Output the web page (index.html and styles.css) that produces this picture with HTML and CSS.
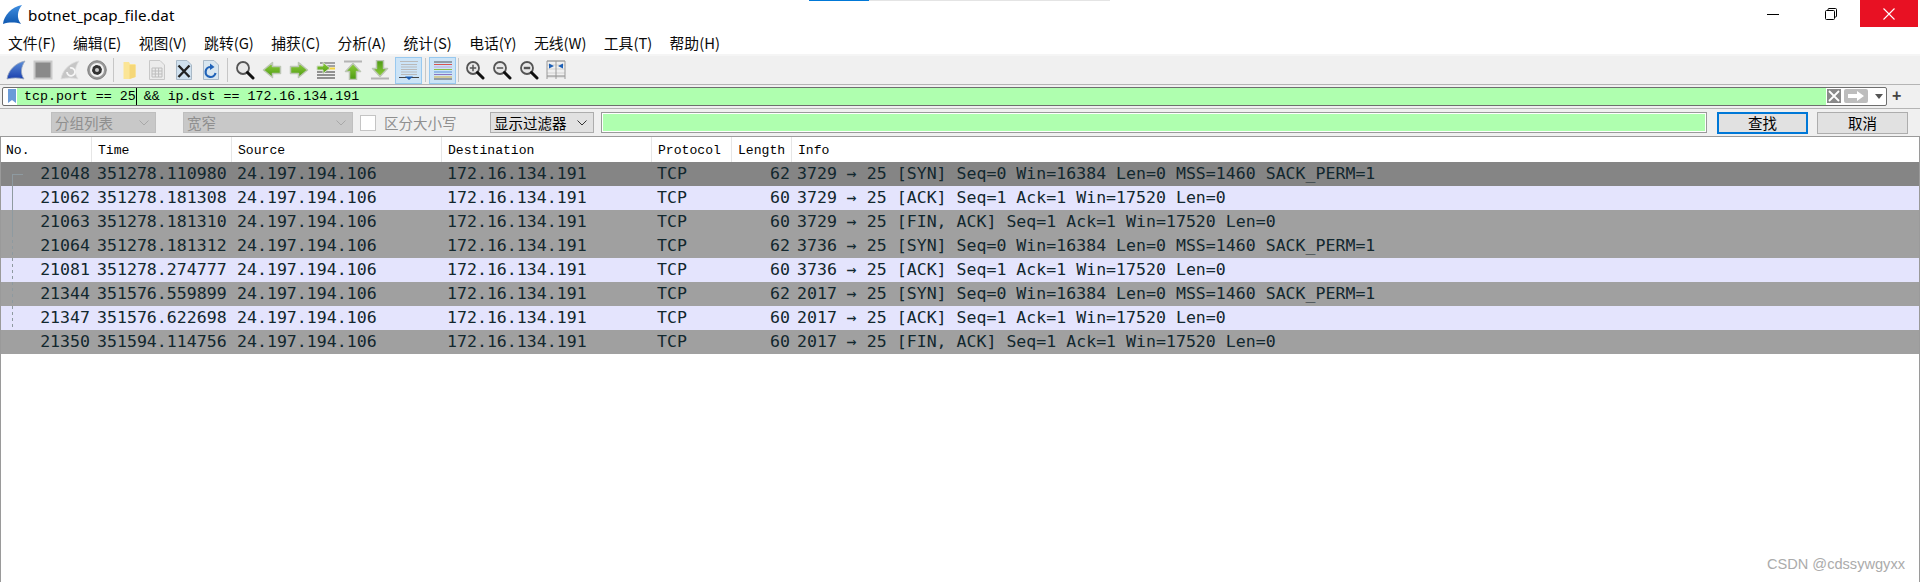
FILE: index.html
```html
<!DOCTYPE html>
<html lang="zh-CN">
<head>
<meta charset="utf-8">
<title>botnet_pcap_file.dat</title>
<link rel="stylesheet" href="styles.css">
</head>
<body>
<svg class="defs" width="0" height="0" aria-hidden="true">
  <defs>
    <linearGradient id="fin" x1="0" y1="0" x2="0" y2="1"><stop offset="0" stop-color="#5d8fd8"/><stop offset="1" stop-color="#1a3fae"/></linearGradient>
    <linearGradient id="finTitle" x1="0" y1="0" x2="0" y2="1"><stop offset="0" stop-color="#3f8ee0"/><stop offset="1" stop-color="#0f58b0"/></linearGradient>
    <linearGradient id="leaf" x1="0" y1="0" x2="0" y2="1"><stop offset="0" stop-color="#8fce3c"/><stop offset="1" stop-color="#4c9a12"/></linearGradient>
    <symbol id="lens" viewBox="0 0 20 20">
      <circle cx="8" cy="8" r="6" fill="#e8e8e8" stroke="#555" stroke-width="1.8"/>
      <path d="M12.5 12.5L18 18" stroke="#111" stroke-width="3" stroke-linecap="round"/>
    </symbol>
    <symbol id="arrowRight" viewBox="0 0 20 20">
      <path d="M1.500 6.500H9.500V2.500L18.500 10L9.500 17.500V13.500H1.500Z" fill="url(#leaf)" stroke="#bcc6b4" stroke-width="1.500" stroke-linejoin="round"/>
    </symbol>
    <symbol id="arrowUp" viewBox="0 0 20 20">
      <path d="M6.500 18.500V10.500H2.500L10 2.500L17.500 10.500H13.500V18.500Z" fill="url(#leaf)" stroke="#bcc6b4" stroke-width="1.500" stroke-linejoin="round"/>
    </symbol>
  </defs>
</svg>

<div class="progress"><span class="progress-fill"></span></div>

<header class="titlebar">
  <div class="title">
    <svg class="title-icon" viewBox="0 0 22 21"><path d="M1 20C2 11 10 2 21 0C16 6 15 14 20 20C14 18 7 18 1 20Z" fill="url(#finTitle)"/></svg>
    <span>botnet_pcap_file.dat</span>
  </div>
  <div class="winctl">
    <span class="winbtn"><svg width="12" height="12" viewBox="0 0 12 12"><path d="M0 6.500H12" stroke="#000"/></svg></span>
    <span class="winbtn"><svg width="12" height="12" viewBox="0 0 12 12" fill="none" stroke="#000"><rect x="0.500" y="2.500" width="9" height="9" rx="1"/><path d="M3 2.500V1.500a1 1 0 0 1 1-1H10.500a1 1 0 0 1 1 1V8a1 1 0 0 1-1 1H9.500"/></svg></span>
    <span class="winbtn close"><svg width="12" height="12" viewBox="0 0 12 12"><path d="M0.500 0.500L11.500 11.500M11.500 0.500L0.500 11.500" stroke="#fff" stroke-width="1.100"/></svg></span>
  </div>
</header>

<nav class="menubar">
  <span>文件(F)</span><span>编辑(E)</span><span>视图(V)</span><span>跳转(G)</span><span>捕获(C)</span><span>分析(A)</span><span>统计(S)</span><span>电话(Y)</span><span>无线(W)</span><span>工具(T)</span><span>帮助(H)</span>
</nav>

<div class="toolbar">
  <span class="tool"><svg viewBox="0 0 20 20"><path d="M1 19C2 11 9 3 19 1C15 7 14 13 18 19C12 17.500 7 17.500 1 19Z" fill="url(#fin)" stroke="#9aa7bd" stroke-width="0.800"/></svg></span>
  <span class="tool"><svg viewBox="0 0 20 20"><rect x="1.500" y="1.500" width="17" height="17" fill="#8a8a8a" stroke="#c9c9c9" stroke-width="2"/></svg></span>
  <span class="tool"><svg viewBox="0 0 20 20"><path d="M1 19C2 11 9 3 19 1C15 7 14 13 18 19C12 17.500 7 17.500 1 19Z" fill="#c6c6c6" stroke="#dedede" stroke-width="0.800"/><path d="M7 12a4 4 0 1 0 3-4" fill="none" stroke="#f6f6f6" stroke-width="1.800"/></svg></span>
  <span class="tool"><svg viewBox="0 0 20 20"><circle cx="10" cy="10" r="9.300" fill="#9a9a9a" stroke="#707070" stroke-width="0.800"/><circle cx="10" cy="10" r="7" fill="#f2f2f2"/><circle cx="10" cy="10" r="5" fill="#333"/><circle cx="10" cy="10" r="5.300" fill="none" stroke="#f2f2f2" stroke-width="1" stroke-dasharray="1.600 2.560"/><circle cx="10" cy="10" r="2" fill="#c8c8c8"/></svg></span>
  <span class="tool-sep"></span>
  <span class="tool"><svg viewBox="0 0 20 20"><path d="M3.500 2H9L10 4H15.500V17L9.500 19H3.500Z" fill="#fbe596"/><path d="M9.500 5H15.500V17L9.500 19Z" fill="#f5d778"/></svg></span>
  <span class="tool"><svg viewBox="0 0 20 20"><path d="M2.500 0.500H13L17.500 5V19.500H2.500Z" fill="#ebebeb" stroke="#c8c8c8"/><path d="M5 8H15V17H5ZM5 11H15M5 14H15M8.300 8V17M11.600 8V17" fill="none" stroke="#bdbdbd"/></svg></span>
  <span class="tool"><svg viewBox="0 0 20 20"><path d="M2.500 0.500H13L17.500 5V19.500H2.500Z" fill="#cfe0ee" stroke="#a9b9c7"/><path d="M4.500 5.500L15.500 17M15.500 5.500L4.500 17" stroke="#222" stroke-width="2.400"/></svg></span>
  <span class="tool"><svg viewBox="0 0 20 20"><path d="M2.500 0.500H13L17.500 5V19.500H2.500Z" fill="#d8e6f0" stroke="#a9b9c7"/><path d="M14.500 13A5 5 0 1 1 10 7" fill="none" stroke="#1f62b8" stroke-width="2.200"/><path d="M9 3.500L13.500 7L9 10Z" fill="#1f62b8"/></svg></span>
  <span class="tool-sep wide"></span>
  <span class="tool"><svg viewBox="0 0 20 20"><use href="#lens"/></svg></span>
  <span class="tool"><svg class="flip" viewBox="0 0 20 20"><use href="#arrowRight"/></svg></span>
  <span class="tool"><svg viewBox="0 0 20 20"><use href="#arrowRight"/></svg></span>
  <span class="tool"><svg viewBox="0 0 20 20"><path d="M4 3H19M11 6H19" stroke="#555"/><path d="M12 8.500H19" stroke="#f2d23c" stroke-width="2"/><path d="M1 12H19M1 15H19M1 18H19" stroke="#333" stroke-width="1.200"/><path d="M1 6H7V2.500L14 8L7 13.500V10H1Z" fill="url(#leaf)" stroke="#d2dbc9"/></svg></span>
  <span class="tool"><svg viewBox="0 0 20 20"><path d="M1 1.500H19" stroke="#b4b4b4" stroke-width="2"/><use href="#arrowUp" y="1"/></svg></span>
  <span class="tool"><svg class="flip-y" viewBox="0 0 20 20"><path d="M1 1.500H19" stroke="#b4b4b4" stroke-width="2"/><use href="#arrowUp" y="1"/></svg></span>
  <span class="tool toggled first-toggle"><svg viewBox="0 0 20 20"><path d="M1 1.500H19M2 4.500H18M2 7H18M2 9.500H18M2 12H18M2 14.500H18" stroke="#b9b9b9"/><path d="M0 17.500H20" stroke="#444"/><path d="M6 16.500H14L10 20Z" fill="#1c5fb6"/></svg></span>
  <span class="tool-sep wide"></span>
  <span class="tool toggled"><svg viewBox="0 0 20 20"><path d="M1 2H19" stroke="#555"/><path d="M1 4.500H19" stroke="#d9534f"/><path d="M1 7H19" stroke="#bfa4d8"/><path d="M1 9.500H19" stroke="#8fbf4a"/><path d="M1 12H19" stroke="#5b8fd8"/><path d="M1 14.500H19" stroke="#8a76c2"/><path d="M1 17H19" stroke="#d9b13c"/><path d="M1 19H19" stroke="#555"/></svg></span>
  <span class="tool-sep narrow"></span>
  <span class="tool"><svg viewBox="0 0 20 20"><use href="#lens"/><path d="M4.800 8H11.200M8 4.800V11.200" stroke="#555" stroke-width="1.500"/></svg></span>
  <span class="tool"><svg viewBox="0 0 20 20"><use href="#lens"/><path d="M4.800 8H11.200" stroke="#555" stroke-width="1.500"/></svg></span>
  <span class="tool"><svg viewBox="0 0 20 20"><use href="#lens"/><rect x="4.800" y="6.800" width="6.400" height="2.400" fill="#555"/></svg></span>
  <span class="tool"><svg viewBox="0 0 20 20"><path d="M1 1H19M1 5H19M1 9H19M1 13H19M1 17H19" stroke="#d2d2d2"/><path d="M1 1H19M1 16H19" stroke="#8a8a8a"/><path d="M1 1V19M10 1V19M19 1V19" stroke="#9a9a9a"/><path d="M3 3.500L8 6L3 8.500ZM17 3.500L12 6L17 8.500Z" fill="#1c5fb6"/></svg></span>
</div>

<div class="filterbar">
  <div class="filter">
    <span class="bookmark"><svg width="8" height="14" viewBox="0 0 8 14"><path d="M0 0H8V14L4 11L0 14Z" fill="#6a9bd8"/></svg></span>
    <div class="filter-text">tcp.port == 25<span class="caret"></span> &amp;&amp; ip.dst == 172.16.134.191</div>
    <div class="filter-actions">
      <span class="clear-btn"><svg width="12" height="12" viewBox="0 0 12 12"><path d="M1 1L11 11M11 1L1 11" stroke="#fff" stroke-width="1.800"/></svg></span>
      <span class="apply-btn"><svg width="16" height="10" viewBox="0 0 16 10"><path d="M0 3H9V0L16 5L9 10V7H0Z" fill="#fff"/></svg></span>
      <span class="drop-btn"></span>
    </div>
  </div>
  <span class="plus">+</span>
</div>

<div class="findbar">
  <span class="select disabled w-list">分组列表<svg class="chev" viewBox="0 0 10 6"><path d="M0.500 0.500L5 5L9.500 0.500" fill="none" stroke="#a8a8a8"/></svg></span>
  <span class="select disabled w-width">宽窄<svg class="chev" viewBox="0 0 10 6"><path d="M0.500 0.500L5 5L9.500 0.500" fill="none" stroke="#a8a8a8"/></svg></span>
  <span class="check"></span>
  <span class="check-label">区分大小写</span>
  <span class="select w-mode">显示过滤器<svg class="chev" viewBox="0 0 10 6"><path d="M0.500 0.500L5 5L9.500 0.500" fill="none" stroke="#333"/></svg></span>
  <span class="find-input"></span>
  <span class="btn primary">查找</span>
  <span class="btn">取消</span>
</div>

<main class="packets">
  <div class="row head">
    <span>No.</span><span>Time</span><span>Source</span><span>Destination</span><span>Protocol</span><span>Length</span><span>Info</span>
  </div>
  <div class="row dark"><span class="no"><i class="rel rel-start"></i>21048</span><span>351278.110980</span><span>24.197.194.106</span><span>172.16.134.191</span><span>TCP</span><span class="len">62</span><span>3729 → 25 [SYN] Seq=0 Win=16384 Len=0 MSS=1460 SACK_PERM=1</span></div>
  <div class="row ack"><span class="no"><i class="rel"></i>21062</span><span>351278.181308</span><span>24.197.194.106</span><span>172.16.134.191</span><span>TCP</span><span class="len">60</span><span>3729 → 25 [ACK] Seq=1 Ack=1 Win=17520 Len=0</span></div>
  <div class="row flag"><span class="no"><i class="rel"></i>21063</span><span>351278.181310</span><span>24.197.194.106</span><span>172.16.134.191</span><span>TCP</span><span class="len">60</span><span>3729 → 25 [FIN, ACK] Seq=1 Ack=1 Win=17520 Len=0</span></div>
  <div class="row flag"><span class="no"><i class="rel rel-dash"></i>21064</span><span>351278.181312</span><span>24.197.194.106</span><span>172.16.134.191</span><span>TCP</span><span class="len">62</span><span>3736 → 25 [SYN] Seq=0 Win=16384 Len=0 MSS=1460 SACK_PERM=1</span></div>
  <div class="row ack"><span class="no"><i class="rel rel-dash"></i>21081</span><span>351278.274777</span><span>24.197.194.106</span><span>172.16.134.191</span><span>TCP</span><span class="len">60</span><span>3736 → 25 [ACK] Seq=1 Ack=1 Win=17520 Len=0</span></div>
  <div class="row flag"><span class="no"><i class="rel rel-dash"></i>21344</span><span>351576.559899</span><span>24.197.194.106</span><span>172.16.134.191</span><span>TCP</span><span class="len">62</span><span>2017 → 25 [SYN] Seq=0 Win=16384 Len=0 MSS=1460 SACK_PERM=1</span></div>
  <div class="row ack"><span class="no"><i class="rel rel-dash rel-end"></i>21347</span><span>351576.622698</span><span>24.197.194.106</span><span>172.16.134.191</span><span>TCP</span><span class="len">60</span><span>2017 → 25 [ACK] Seq=1 Ack=1 Win=17520 Len=0</span></div>
  <div class="row flag"><span class="no">21350</span><span>351594.114756</span><span>24.197.194.106</span><span>172.16.134.191</span><span>TCP</span><span class="len">60</span><span>2017 → 25 [FIN, ACK] Seq=1 Ack=1 Win=17520 Len=0</span></div>
  <div class="credit">CSDN @cdssywgyxx</div>
</main>
</body>
</html>
```
FILE: styles.css
```css
* { box-sizing: border-box; }

html, body {
  margin: 0;
  height: 582px;
  overflow: hidden;
  background: #fff;
}

body {
  display: flex;
  flex-direction: column;
  font-family: "Noto Sans CJK SC", "Noto Sans", sans-serif;
  color: #000;
  position: relative;
}

.defs { position: absolute; }

/* thin download strip along the top edge */
.progress {
  position: absolute;
  top: 0;
  left: 809px;
  width: 301px;
  height: 1px;
  background: #e4e4e4;
}
.progress-fill {
  display: block;
  width: 60px;
  height: 1px;
  background: #0078d7;
}

/* title bar */
.titlebar {
  height: 34px;
  display: flex;
  justify-content: space-between;
  align-items: flex-start;
  padding-right: 2px;
  flex: none;
}
.title {
  display: flex;
  align-items: center;
  height: 30px;
  padding-left: 2px;
  font-family: "Noto Sans", sans-serif;
  font-size: 15.200px;
  letter-spacing: 0.100px;
}
.title-icon { width: 21px; height: 20px; margin-right: 5px; }
.winctl { display: flex; }
.winbtn {
  width: 58px;
  height: 27px;
  display: flex;
  align-items: center;
  justify-content: center;
}
.winbtn.close { background: #e81123; }

/* menu */
.menubar {
  height: 20px;
  display: flex;
  gap: 17.300px;
  padding-left: 8px;
  font-size: 14.800px;
  line-height: 18px;
  flex: none;
  white-space: nowrap;
  color: #0a0a0a;
}

/* main toolbar */
.toolbar {
  height: 31px;
  flex: none;
  display: flex;
  align-items: center;
  padding-left: 2px;
  background: #f0f0f0;
  border-top: 2px solid #f5f5f5;
  border-bottom: 1px solid #b4b4b4;
}
.tool {
  width: 27px;
  height: 27px;
  flex: none;
  display: flex;
  align-items: center;
  justify-content: center;
}
.tool svg { width: 20px; height: 20px; }
.tool svg.flip { transform: scaleX(-1); }
.tool svg.flip-y { transform: scaleY(-1); }
.tool.toggled {
  background: #cce4f7;
  border: 1px solid #99c9ef;
}
.first-toggle { margin-left: 2px; }
.tool-sep {
  width: 6px;
  height: 24px;
  flex: none;
  background: linear-gradient(#c6c6c6, #c6c6c6) center / 1px 100% no-repeat;
}
.tool-sep.wide { width: 7px; }
.tool-sep.narrow { width: 5px; }

/* display filter */
.filterbar {
  height: 24px;
  flex: none;
  display: flex;
  align-items: center;
  padding: 0 0 1px 2px;
  background: #f0f0f0;
  border-bottom: 1px solid #b4b4b4;
}
.filter {
  width: 1885px;
  height: 19px;
  flex: none;
  display: flex;
  border: 1px solid #6e6e6e;
  border-radius: 2px;
  background: #fff;
}
.bookmark {
  width: 14px;
  flex: none;
  display: flex;
  align-items: center;
  justify-content: center;
  padding-left: 3px;
}
.filter-text {
  flex: 1;
  background: #afffaf;
  padding-left: 7px;
  font-family: "Liberation Mono", monospace;
  font-size: 13.300px;
  line-height: 18px;
  color: #000;
  white-space: pre;
}
.caret {
  display: inline-block;
  width: 1px;
  height: 17px;
  margin-right: -1px;
  background: #000;
  vertical-align: top;
}
.filter-actions {
  width: 60px;
  flex: none;
  display: flex;
  align-items: center;
  padding-left: 1px;
}
.clear-btn {
  width: 14px;
  height: 14px;
  background: #8a8a8a;
  display: flex;
  align-items: center;
  justify-content: center;
}
.apply-btn {
  width: 24px;
  height: 14px;
  margin-left: 3px;
  border-radius: 2px;
  background: #bdbdbd;
  display: flex;
  align-items: center;
  justify-content: center;
}
.drop-btn {
  margin-left: 7px;
  width: 0;
  height: 0;
  border-left: 4px solid transparent;
  border-right: 4px solid transparent;
  border-top: 5px solid #555;
}
.plus {
  margin-left: 5px;
  font-family: "Liberation Sans", sans-serif;
  font-weight: 700;
  font-size: 16px;
  line-height: 16px;
  color: #444;
}

/* find bar */
.findbar {
  height: 27px;
  flex: none;
  display: flex;
  align-items: center;
  padding: 0 12px 0 51px;
  background: #f0f0f0;
  font-size: 14.500px;
}
.select {
  height: 21px;
  flex: none;
  display: flex;
  align-items: center;
  justify-content: space-between;
  padding: 0 6px 0 3px;
  background: #e1e1e1;
  border: 1px solid #adadad;
  line-height: 19px;
  white-space: nowrap;
}
.select.disabled {
  background: #c8c8c8;
  border-color: #bfbfbf;
  color: #8f8f8f;
}
.chev { width: 10px; height: 6px; }
.w-list { width: 105px; }
.w-width { width: 170px; margin-left: 27px; }
.check {
  width: 16px;
  height: 16px;
  margin-left: 7px;
  flex: none;
  background: #fff;
  border: 1px solid #c4c4c4;
}
.check-label { margin-left: 8px; width: 73px; color: #8f8f8f; white-space: nowrap; }
.w-mode { width: 104px; margin-left: 33px; }
.find-input {
  width: 1106px;
  height: 21px;
  margin-left: 7px;
  flex: none;
  background: #afffaf;
  border: 1px solid #9a9a9a;
  box-shadow: inset 0 0 0 1px #fff;
}
.btn {
  width: 91px;
  height: 22px;
  flex: none;
  margin-left: 9px;
  display: flex;
  align-items: center;
  justify-content: center;
  background: #e1e1e1;
  border: 1px solid #adadad;
}
.btn.primary {
  margin-left: 10px;
  border: 2px solid #0078d7;
}

/* packet list */
.packets {
  flex: 1;
  position: relative;
  border: 1px solid #9a9a9a;
  border-bottom: 0;
  background: #fff;
  font-family: "DejaVu Sans Mono", monospace;
  font-size: 16.570px;
  color: #12272e;
}
.row {
  height: 24px;
  display: grid;
  grid-template-columns: 91px 140px 210px 210px 80px 60px 1fr;
  align-items: center;
  white-space: pre;
}
.row > span {
  padding-left: 5px;
  height: 100%;
  line-height: 24px;
  overflow: hidden;
  position: relative;
}
.row.head {
  height: 25px;
  font-family: "Liberation Mono", monospace;
  font-size: 13.100px;
  color: #000;
}
.row.head > span {
  padding-left: 6px;
  border-right: 1px solid #e6e6e6;
  line-height: 27px;
}
.row.head > span:first-child { padding-left: 5px; }
.row.head > span:last-child { border-right: 0; }
.dark { background: #858585; }
.flag { background: #a0a0a0; }
.ack { background: #e4e4fd; }
.row > .no, .row > .len {
  padding: 0 2px 0 0;
  text-align: right;
}

/* related-packet bracket in the No. column */
.rel {
  position: absolute;
  left: 11px;
  top: 0;
  bottom: 0;
  width: 1px;
  background: #8e9aa0;
}
.rel-start {
  top: 12px;
  width: 11px;
  background: none;
  border-top: 1px solid #8e9aa0;
  border-left: 1px solid #8e9aa0;
}
.rel-dash {
  background: repeating-linear-gradient(#8e9aa0 0 3px, transparent 3px 6px);
}
.rel-end { bottom: 2px; }

.credit {
  position: absolute;
  right: 14px;
  bottom: 8px;
  font-family: "Liberation Sans", sans-serif;
  font-size: 14.600px;
  line-height: 20px;
  color: #ababab;
  white-space: nowrap;
}
```
